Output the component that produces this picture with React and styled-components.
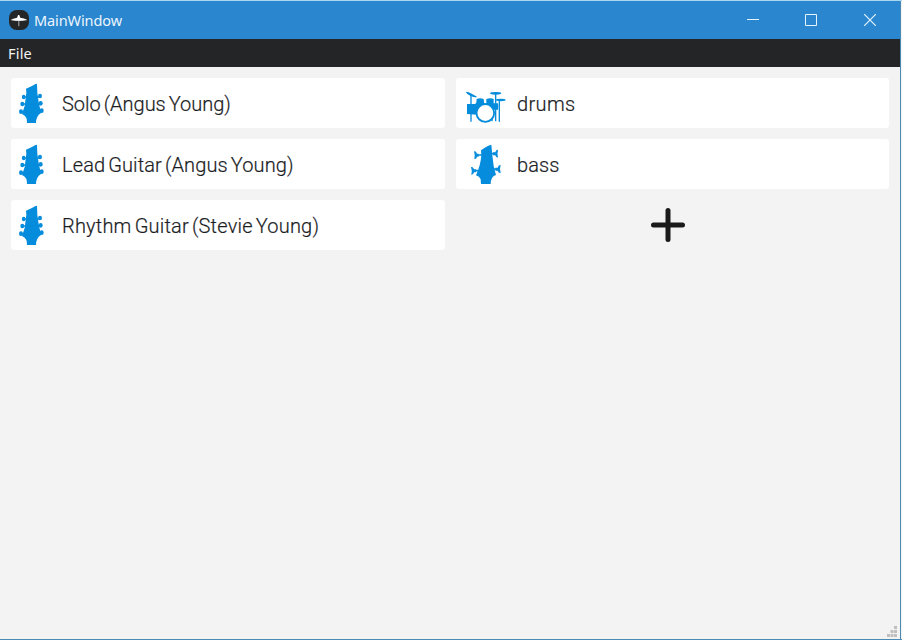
import React from "react";
import styled, { createGlobalStyle } from "styled-components";

const Global = createGlobalStyle`
  *{box-sizing:border-box}
  body{margin:0;background:#f3f3f3;overflow:hidden;font-family:Roboto,"Liberation Sans",sans-serif}
`;
const Window = styled.div`
  position:relative;width:902px;height:640px;display:flex;flex-direction:column;
  background:#f3f3f3;border-top:1px solid #a9d5f1;border-bottom:1px solid #4a8ab5;
`;
const Frame = styled.div`
  flex:1;display:flex;flex-direction:column;margin-right:1px;border-right:1px solid #4a8ab5;
`;
const TitleBar = styled.header`
  height:38px;display:flex;align-items:center;background:#2a86ce;padding-left:9px;
`;
const Title = styled.span`
  flex:1;margin-left:5px;color:#eaf5fd;font-family:"Noto Sans",sans-serif;font-size:14.5px;line-height:20px;
  letter-spacing:-.1px;padding-bottom:1px;
`;
const Controls = styled.div`
  display:flex;gap:46px;margin-right:24px;
  svg:last-child{margin-left:1px}
`;
const MenuBar = styled.nav`
  height:28px;display:flex;align-items:center;padding-left:8px;background:#232527;
`;
const MenuItem = styled.span`
  color:#f3f3f3;font-family:"Noto Sans",sans-serif;font-size:14.5px;line-height:20px;padding-bottom:1px;letter-spacing:.2px;
`;
const Tracks = styled.main`
  display:grid;grid-template-columns:434px 433px;grid-auto-rows:50px;gap:11px;padding:11px;
`;
const Card = styled.div`
  display:flex;align-items:center;background:#fff;border-radius:3px;grid-column:${p => p.$col};grid-row:${p => p.$row};
`;
const Label = styled.span`
  margin-left:${p => p.$indent}px;padding-top:2px;color:#1b1d1f;font-size:20px;font-weight:300;line-height:24px;
  white-space:nowrap;letter-spacing:${p => p.$track}px;word-spacing:-2px;-webkit-text-stroke:.2px #1b1d1f;
`;
const AddButton = styled.button`
  grid-column:2;grid-row:3;border:0;background:none;padding:0 9px 0 0;display:flex;align-items:center;justify-content:center;
`;
const Grip = styled.svg`position:absolute;right:5px;bottom:2px;`;

const blue = "#058cdc";

const Guitar = () => (
  <svg width="51" height="50" viewBox="9 12 153 150" fill={blue}>
    <path d="M87 29Q80 30 76 34Q66 39 54 44L55 56L50 96L42 120Q52 124 55 132Q57 137 57 147H84Q84 136 88 129Q91 122 99 117L92 84L88 56Z" />
    <path d="M44 69H98M40 90H100M38 113H102" stroke={blue} strokeWidth="4" />
    <ellipse cx="47" cy="69" rx="5.5" ry="7" /><ellipse cx="43" cy="90" rx="6" ry="7" /><ellipse cx="39" cy="113" rx="6" ry="7" />
    <ellipse cx="96" cy="66" rx="6" ry="7" /><ellipse cx="98" cy="88" rx="6" ry="7" /><ellipse cx="101" cy="110" rx="6" ry="7" />
  </svg>
);
const Bass = () => (
  <svg width="51" height="50" viewBox="-12 9 153 150" fill={blue}>
    <path d="M94 26Q84 28 78 33Q69 38 63 43L64 58Q62 88 48 118Q59 121 62 130L63 144H92Q92 134 96 126Q100 119 108 117Q99 90 97 58Z" />
    <path d="M48 57H66M94 53H108M37 104H56M98 99H116" stroke={blue} strokeWidth="5" />
    <path d="M42 46Q48 44 51 53H56V62H51Q50 70 43 69Q46 58 42 46ZM114 41Q107 40 106 49H99V58H106Q108 66 114 64Q111 53 114 41ZM33 93Q39 91 42 100H48V109H42Q40 117 34 116Q37 104 33 93ZM122 87Q115 86 113 95H106V104H113Q115 112 122 111Q118 99 122 87Z" />
  </svg>
);
const Drums = () => (
  <svg width="51" height="50" viewBox="-12 12 153 150" fill={blue}>
    <path d="M33 64V90M33 118V143M107 58V142M118 78V143M96 108V142" fill="none" stroke={blue} strokeWidth="4" />
    <path d="M17 53Q27 53 35 59L51 68Q48 73 32 66Q20 61 17 53Z" />
    <ellipse cx="107" cy="58" rx="17" ry="4" /><ellipse cx="122" cy="78" rx="15" ry="3.5" />
    <path d="M21 90H52V122L21 120ZM50 75Q60 71 71 75L73 92L48 93ZM79 75Q91 71 101 75V92H79Z" />
    <path d="M46 88H96L114 88Q116 98 114 107L98 107L50 112Z" />
    <circle cx="76" cy="117" r="26.5" fill="#fff" stroke={blue} strokeWidth="5.5" />
  </svg>
);

const tracks = [
  { name: "Solo (Angus Young)", Icon: Guitar, col: 1, row: 1, track: 0 },
  { name: "Lead Guitar (Angus Young)", Icon: Guitar, col: 1, row: 2, track: 0.12 },
  { name: "Rhythm Guitar (Stevie Young)", Icon: Guitar, col: 1, row: 3, track: 0.2 },
  { name: "drums", Icon: Drums, col: 2, row: 1, track: 0.35 },
  { name: "bass", Icon: Bass, col: 2, row: 2, track: 0.1 },
];

export default function App() {
  return (
    <>
      <Global />
      <Window>
        <Frame>
          <TitleBar>
            <svg width="20" height="20" viewBox="0 0 60 60">
              <rect width="60" height="60" rx="24" fill="#232527" />
              <path d="M5 31Q6 26 24 23L27 18H31L34 23Q51 25 55 31Q42 33 31 33V49H28V33Q15 33 5 31Z" fill="#aaa" />
              <path d="M6 29Q18 26 25 23L27 15H31L33 23Q42 25 54 29Q42 32 30 32Q16 32 6 29Z" fill="#fff" />
            </svg>
            <Title>MainWindow</Title>
            <Controls>
              <svg width="12" height="12" fill="none" stroke="#e5f4fd"><path d="M0 5.5H12" /></svg>
              <svg width="12" height="12" fill="none" stroke="#e5f4fd"><path d="M.5.5H11.5V11.5H.5Z" /></svg>
              <svg width="12" height="12" fill="none" stroke="#e5f4fd" strokeWidth="1.2"><path d="M0 0L12 12M12 0L0 12" /></svg>
            </Controls>
          </TitleBar>
          <MenuBar><MenuItem>File</MenuItem></MenuBar>
          <Tracks>
            {tracks.map(({ name, Icon, col, row, track }) => (
              <Card key={name} $col={col} $row={row}>
                <Icon />
                <Label $indent={col === 1 ? 0 : 10} $track={track}>{name}</Label>
              </Card>
            ))}
            <AddButton aria-label="Add track">
              <svg width="34" height="34" stroke="#1a1a1a" strokeWidth="5" strokeLinecap="round"><path d="M2.5 17H31.5M17 2.5V31.5" /></svg>
            </AddButton>
          </Tracks>
        </Frame>
        <Grip width="10" height="11" fill="#bfbfbf">
          <path d="M7 0h3v3h-3zM7 4h3v3h-3zM3.5 4h3v3h-3zM7 8h3v3h-3zM3.5 8h3v3h-3zM0 8h3v3h-3z" />
        </Grip>
      </Window>
    </>
  );
}
